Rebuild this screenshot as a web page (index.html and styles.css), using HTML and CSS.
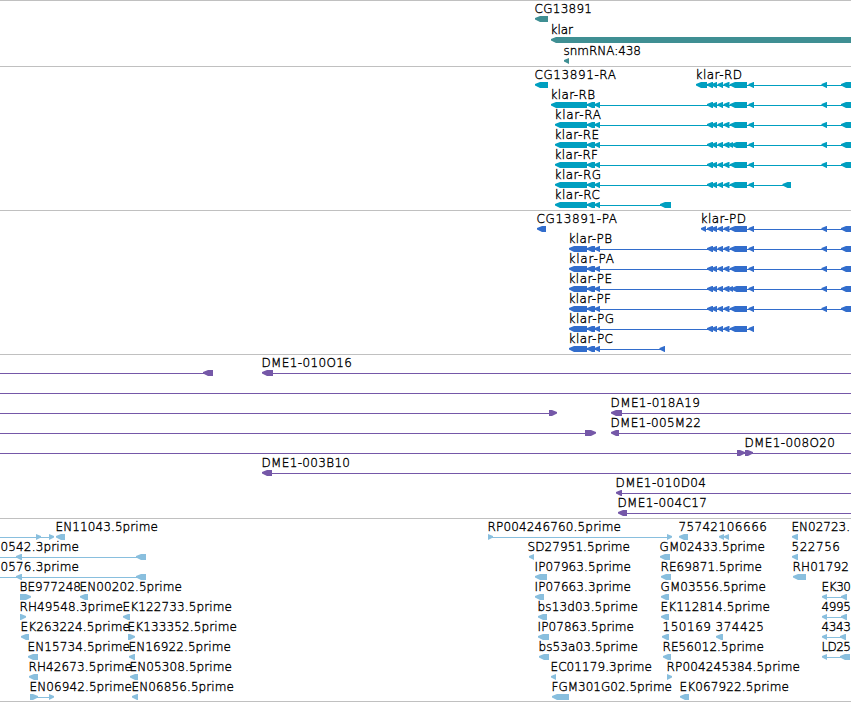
FILE: index.html
```
<!DOCTYPE html>
<html lang="en">
<head>
<meta charset="utf-8">
<title>Genome browser</title>
<link rel="stylesheet" href="styles.css">
</head>
<body>
<main class="browser">
  <section class="track track-gene" id="gene"></section>
  <section class="track track-mrna" id="mrna"></section>
  <section class="track track-cds" id="cds"></section>
  <section class="track track-bac" id="bac"></section>
  <section class="track track-est" id="est"></section>
</main>
<script src="tracks.js"></script>
</body>
</html>
```
FILE: styles.css
```
body {
  margin: 0;
  background: #fff;
  overflow: hidden;
}

.browser {
  display: flex;
  flex-direction: column;
  width: 851px;
  height: 701px;
  border-bottom: 1px solid #c0c0c0;
}

.track {
  border-top: 1px solid #c0c0c0;
  padding-bottom: 3px;
}

.track-gene {
  color: #3f8f93;
  padding-bottom: 2px;
}

.track-mrna { color: #009fc0; }
.track-cds { color: #326dcc; }
.track-bac { color: #7558a8; }

.track-est {
  color: #89bfde;
  padding-bottom: 2px;
}

.row {
  display: block;
  width: 851px;
  height: 20px;
  overflow: visible;
}

.track-gene .row { height: 21px; }

.shape { fill: currentColor; }

.label {
  fill: #000;
  stroke: #000;
  stroke-width: 0.35px;
  font-family: "DejaVu Sans", sans-serif;
  font-weight: 200;
  font-size: 12px;
}
```
FILE: tracks.js
```
// Feature: "<start-end" points left, ">start-end" points right, "-start-end" is a connecting line.
// Label: [text, left edge, right edge].
const tail = " <707-713 <711.5-717 <717.5-723 <723.5-729.5";
const exons = tail + " <730-747 <748.5-754";
const exonsE = tail + " <728-733 <731.5-747 <748.5-754";
const far = " <821.5-827 <841-856";
const near = " <587-595 <594.5-600";

const tracks = {
  gene: [
    ["<535-548", ["CG13891", 535, 592]],
    ["<551-860", ["klar", 551, 573]],
    ["<564-569", ["snmRNA:438", 564, 641]]
  ],
  mrna: [
    ["<535-548 -700-851 <696-707" + exons + far, ["CG13891-RA", 535, 616], ["klar-RD", 696, 742]],
    ["-555-851 <551-587" + near + exons + far, ["klar-RB", 551, 595]],
    ["-558-851 <555-587" + near + exons + far, ["klar-RA", 555, 601]],
    ["-558-851 <555-587" + near + exonsE + far, ["klar-RE", 555, 599]],
    ["-558-851 <555-587" + near + exons + far, ["klar-RF", 555, 598]],
    ["-558-790 <555-587" + near + exons + " <782.5-791", ["klar-RG", 555, 601]],
    ["-558-670 <555-587" + near + " <660-671", ["klar-RC", 555, 600]]
  ],
  cds: [
    ["<537-546 -703-851 <701-706" + exons + far, ["CG13891-PA", 537, 617], ["klar-PD", 701, 746]],
    ["-573-851 <569-587" + near + exons + far, ["klar-PB", 569, 612]],
    ["-573-851 <569-587" + near + exons + far, ["klar-PA", 569, 614]],
    ["-573-851 <569-587" + near + exonsE + far, ["klar-PE", 569, 612]],
    ["-573-851 <569-587" + near + exons + far, ["klar-PF", 569, 611]],
    ["-573-753 <569-587" + near + exons, ["klar-PG", 569, 614]],
    ["-573-664 <569-587" + near + " <659.5-665", ["klar-PC", 569, 613]]
  ],
  bac: [
    ["-0-205 <203-213 -264-851 <262-273", ["DME1-010O16", 262, 352]],
    ["-0-851"],
    ["-0-551 >549-557 -613-851 <611-622", ["DME1-018A19", 611, 700]],
    ["-0-588 >585-596 -613-851 <611-619", ["DME1-005M22", 611, 701]],
    ["-0-851 >737-745 >745-753", ["DME1-008O20", 745, 835]],
    ["-264-851 <262-272", ["DME1-003B10", 262, 350]],
    ["-618-851 <616-622", ["DME1-010D04", 616, 706]],
    ["-620-851 <618-627", ["DME1-004C17", 618, 707]]
  ],
  est: [
    ["-0-52 >36-41 >49-54 <56-65 -488-670 >488-493 >667-672 <679-688 <719-724 <724-729 <792-798",
      ["EN11043.5prime", 56, 158], ["RP004246760.5prime", 488, 621], ["75742", 679, 718], ["106666", 719, 767], ["EN02723.", 792, 850]],
    ["-0-140 <16-22 <136-146 <529-534 <660-670 <792-798",
      ["0542.3prime", 1, 79], ["SD27951.5prime", 528, 630], ["GM02433.5prime", 660, 765], ["522756", 792, 840]],
    ["-0-140 <16-22 <136-146 <535-547 <661-671 <793-806",
      ["0576.3prime", 1, 79], ["IP07963.5prime", 535, 631], ["RE69871.5prime", 661, 762], ["RH01792", 793, 849]],
    [">20-31 <80-88 <535-544 <661-669 -824-845 <822-827 <841-847",
      ["BE977248", 20, 81], ["EN00202.5prime", 80, 182], ["IP07663.3prime", 535, 631], ["GM03556.5prime", 661, 766], ["EK30", 822, 851]],
    [">20-26 <123-130 <538-547 <661-669 -824-845 <822-827 <841-847",
      ["RH49548.3prime", 20, 123], ["EK122733.5prime", 123, 232], ["bs13d03.5prime", 538, 638], ["EK112814.5prime", 661, 770], ["4995", 822, 851]],
    ["<21-29 >128-135 <538-549 <662-669 <716-723 -824-845 <822-827 <840-846",
      ["EK263224.5prime", 21, 130], ["EK133352.5prime", 128, 237], ["IP07863.5prime", 538, 634], ["150169", 663, 711], ["374425", 716, 764], ["4343", 822, 851]],
    ["<28-38 <129-135 <539-549 <663-671 -824-845 <822-827 <840-850",
      ["EN15734.5prime", 28, 130], ["EN16922.5prime", 129, 231], ["bs53a03.5prime", 539, 638], ["RE56012.5prime", 663, 764], ["LD25", 822, 851]],
    ["<29-38 <130-138 <551-556 >667-672",
      ["RH42673.5prime", 29, 132], ["EN05308.5prime", 130, 232], ["EC01179.3prime", 551, 652], ["RP004245384.5prime", 667, 800]],
    [">30-38 -34-51 >49-54 <132-138 <552-569 <680-689",
      ["EN06942.5prime", 30, 132], ["EN06856.5prime", 132, 234], ["FGM301G02.5prime", 552, 672], ["EK067922.5prime", 680, 789]]
  ]
};

const SVG = "http://www.w3.org/2000/svg";

function add(parent, name, attrs) {
  const el = document.createElementNS(SVG, name);
  for (const key in attrs) el.setAttribute(key, attrs[key]);
  parent.appendChild(el);
  return el;
}

for (const id in tracks) {
  const section = document.getElementById(id);
  for (const [features, ...labels] of tracks[id]) {
    const row = add(section, "svg", { class: "row" });
    for (const f of features.trim().split(/\s+/)) {
      const [a, b] = f.slice(1).split("-").map(Number);
      if (f[0] === "-") {
        add(row, "rect", { class: "shape", x: a, y: 18, width: b - a, height: 1 });
      } else {
        const left = f[0] === "<";
        const tip = left ? a : b;
        const base = left ? b : a;
        const neck = left ? Math.min(a + 5, b) : Math.max(b - 5, a);
        add(row, "polygon", {
          class: "shape",
          points: `${tip},17 ${tip},18.6 ${neck},21 ${base},21 ${base},15 ${neck},15`
        });
      }
    }
    for (const [text, a, b] of labels) {
      add(row, "text", { class: "label", x: a - 0.5, y: 12, textLength: b - a + 0.5 }).textContent = text;
    }
  }
}
```
